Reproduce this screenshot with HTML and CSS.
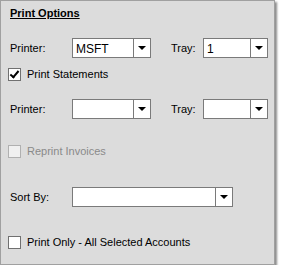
FILE: index.html
```html
<!DOCTYPE html>
<html lang="en">
  <head>
    <meta charset="UTF-8" />
    <title>Print Options</title>
    <link rel="stylesheet" href="styles.css">
  </head>
  <body>
    <div class="panel">
      <div class="title">Print Options</div>

      <div class="row row-printer">
        <span class="label">Printer:</span>
        <div class="combo combo-printer">
          <span class="value">MSFT</span>
          <span class="arrow"></span>
        </div>
        <span class="label tray-label">Tray:</span>
        <div class="combo combo-tray">
          <span class="value">1</span>
          <span class="arrow"></span>
        </div>
      </div>

      <label class="check check-statements">
        <span class="box checked"></span>
        <span>Print Statements</span>
      </label>

      <div class="row row-printer2">
        <span class="label">Printer:</span>
        <div class="combo combo-printer">
          <span class="value"></span>
          <span class="arrow"></span>
        </div>
        <span class="label tray-label">Tray:</span>
        <div class="combo combo-tray">
          <span class="value"></span>
          <span class="arrow"></span>
        </div>
      </div>

      <label class="check check-reprint disabled">
        <span class="box"></span>
        <span>Reprint Invoices</span>
      </label>

      <div class="row row-sort">
        <span class="label">Sort By:</span>
        <div class="combo combo-sort">
          <span class="value"></span>
          <span class="arrow"></span>
        </div>
      </div>

      <label class="check check-only">
        <span class="box"></span>
        <span>Print Only - All Selected Accounts</span>
      </label>
    </div>
  </body>
</html>
```

FILE: styles.css
```css
body {
  margin: 0;
  background: #fff;
  font-family: "Liberation Sans", Arial, sans-serif;
  font-size: 11px;
  color: #000;
}
.panel {
  box-sizing: border-box;
  width: 275px;
  height: 265px;
  background: #dcdcdc;
  border: 1px solid #a0a0a0;
  box-shadow: 2px 2px 2px rgba(0, 0, 0, 0.45);
  padding: 6px 0 0 9px;
}
.title {
  font-weight: bold;
  font-size: 11px;
  text-decoration: underline;
  height: 14px;
}
.row {
  display: flex;
  align-items: center;
  height: 20px;
}
.row-printer {
  margin-top: 17px;
}
.row-printer2 {
  margin-top: 18px;
}
.row-sort {
  margin-top: 29px;
}
.label {
  width: 62px;
}
.tray-label {
  width: 32px;
  margin-left: 20px;
}
.combo {
  box-sizing: border-box;
  display: flex;
  height: 20px;
  border: 1px solid #7a7a7a;
  background: #fff;
}
.combo-printer {
  width: 79px;
}
.combo-tray {
  width: 65px;
}
.combo-sort {
  width: 161px;
}
.value {
  flex: 1;
  padding: 3px 0 0 3px;
  font-size: 12px;
}
.arrow {
  width: 16px;
  border-left: 1px solid #7a7a7a;
  position: relative;
}
.arrow::after {
  content: "";
  position: absolute;
  left: 4px;
  top: 7px;
  border-left: 4px solid transparent;
  border-right: 4px solid transparent;
  border-top: 4px solid #000;
}
.check {
  display: flex;
  align-items: center;
  gap: 6px;
  margin-left: -2px;
  height: 14px;
}
.check-statements {
  margin-top: 9px;
}
.check-reprint {
  margin-top: 25px;
}
.check-only {
  margin-top: 28px;
}
.box {
  box-sizing: border-box;
  width: 13px;
  height: 13px;
  border: 1px solid #707070;
  background: #fff;
  position: relative;
}
.box.checked::after {
  content: "";
  position: absolute;
  left: 3px;
  top: 0px;
  width: 3px;
  height: 7px;
  border-right: 2px solid #000;
  border-bottom: 2px solid #000;
  transform: rotate(40deg);
}
.disabled {
  color: #8a8a8a;
}
.disabled .box {
  background: #f0f0f0;
  border-color: #b0b0b0;
}
```
